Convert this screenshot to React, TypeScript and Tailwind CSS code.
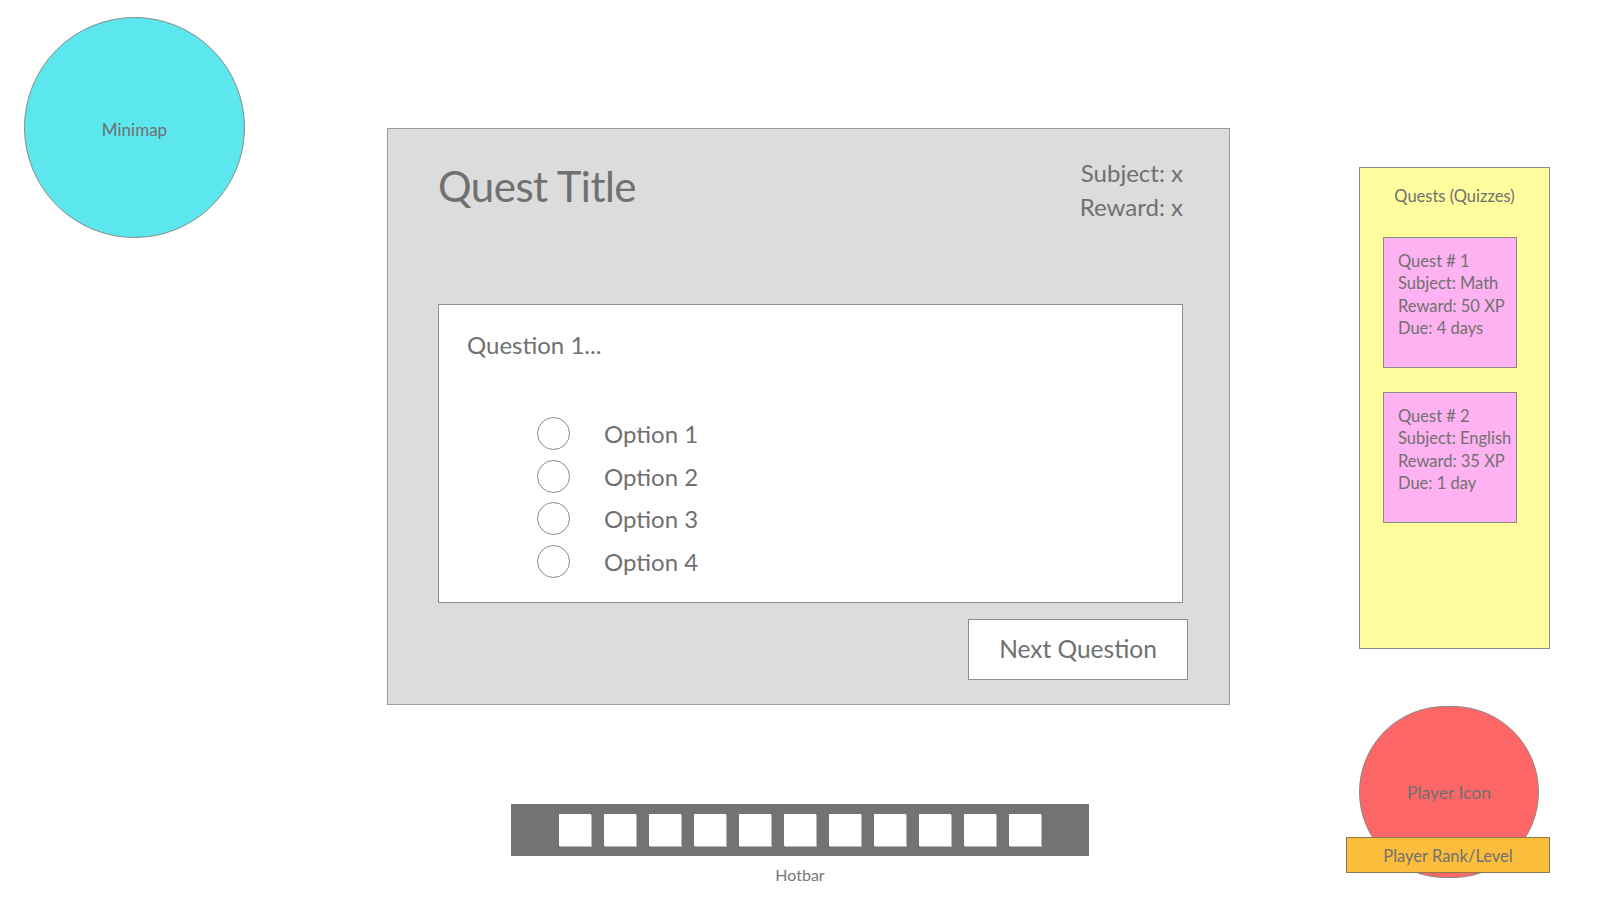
import React from "react";

const options = ["Option 1", "Option 2", "Option 3", "Option 4"];
const quests = [
  ["Quest # 1", "Subject: Math", "Reward: 50 XP", "Due: 4 days"],
  ["Quest # 2", "Subject: English", "Reward: 35 XP", "Due: 1 day"],
];

export default function App() {
  return (
    <div className="w-[1600px] h-[900px] bg-white overflow-hidden flex font-['Lato',sans-serif] text-[#707070]">
      {/* Left column: minimap */}
      <div className="pl-[24px] pt-[17px] shrink-0">
        <div className="w-[221px] h-[221px] rounded-full bg-[#5ce6ed] border border-[#8a8a8a] flex items-center justify-center">
          <span className="text-[17px] leading-none mt-[3px]">Minimap</span>
        </div>
      </div>

      {/* Center column: quest panel + hotbar */}
      <div className="ml-[142px] pt-[128px] shrink-0 flex flex-col">
        <div className="w-[843px] h-[577px] bg-[#dcdcdc] border border-[#9c9c9c] flex flex-col pl-[50px] pr-[46px]">
          <div className="h-[175px] flex justify-between items-start pt-[27px]">
            <h1 className="text-[42px] leading-[44px] mt-[8px] tracking-[-0.5px]">Quest Title</h1>
            <div className="text-[24px] leading-[34px] text-right">
              <div>Subject: x</div>
              <div>Reward: x</div>
            </div>
          </div>

          <div className="h-[299px] bg-white border border-[#8e8e8e] pl-[28px] pt-[25px] flex flex-col">
            <div className="text-[24px] leading-[30px]">Question 1...</div>
            <div className="mt-[57px] ml-[70px] flex flex-col">
              {options.map((o) => (
                <div key={o} className="h-[42.7px] flex items-start">
                  <div className="w-[33px] h-[33px] rounded-full border border-[#8c8c8c] bg-white shrink-0" />
                  <span className="ml-[34px] text-[24px] leading-[33px]">{o}</span>
                </div>
              ))}
            </div>
          </div>

          <div className="flex justify-end mt-[16px] -mr-[5px]">
            <button className="w-[220px] h-[61px] bg-white border border-[#8e8e8e] text-[24.5px] text-[#707070] flex items-center justify-center">
              Next Question
            </button>
          </div>
        </div>

        <div className="mt-[99px] ml-[124px] w-[578px] h-[52px] bg-[#737373] flex items-center justify-center gap-[13px]">
          {Array.from({ length: 11 }).map((_, i) => (
            <div key={i} className="w-[32px] h-[32px] bg-white shadow-[1px_1px_0_#b8b8b8]" />
          ))}
        </div>
        <div className="ml-[124px] w-[578px] text-center text-[16px] leading-[20px] mt-[9px] text-[#777777]">Hotbar</div>
      </div>

      {/* Right column: quests + player */}
      <div className="ml-[116px] pt-[167px] w-[204px] shrink-0 flex flex-col">
        <div className="ml-[13px] w-[191px] h-[482px] bg-[#fffd9d] border border-[#8a8a8a] flex flex-col items-center pt-[16px]">
          <div className="text-[16.5px] leading-[24px]">Quests (Quizzes)</div>
          <div className="mt-[29px] flex flex-col gap-[24px] self-start ml-[23px]">
            {quests.map((q) => (
              <div key={q[0]} className="w-[134px] h-[131px] bg-[#feb2f1] border border-[#8a8a8a] pl-[14px] pt-[12px] text-[16.5px] leading-[22.4px] whitespace-nowrap">
                {q.map((l) => (
                  <div key={l}>{l}</div>
                ))}
              </div>
            ))}
          </div>
        </div>

        <div className="mt-[57px] flex flex-col">
          <div className="ml-[13px] w-[180px] h-[172px] rounded-full bg-[#fe6767] border border-[#8a8a8a] flex items-center justify-center">
            <span className="text-[17.5px] leading-none mt-[2px]">Player Icon</span>
          </div>
          <div className="relative -mt-[41px] w-[204px] h-[36px] bg-[#fdbd3c] border border-[#8a7a50] flex items-center justify-center">
            <span className="text-[16.5px] leading-none mt-[3px]">Player Rank/Level</span>
          </div>
        </div>
      </div>
    </div>
  );
}
